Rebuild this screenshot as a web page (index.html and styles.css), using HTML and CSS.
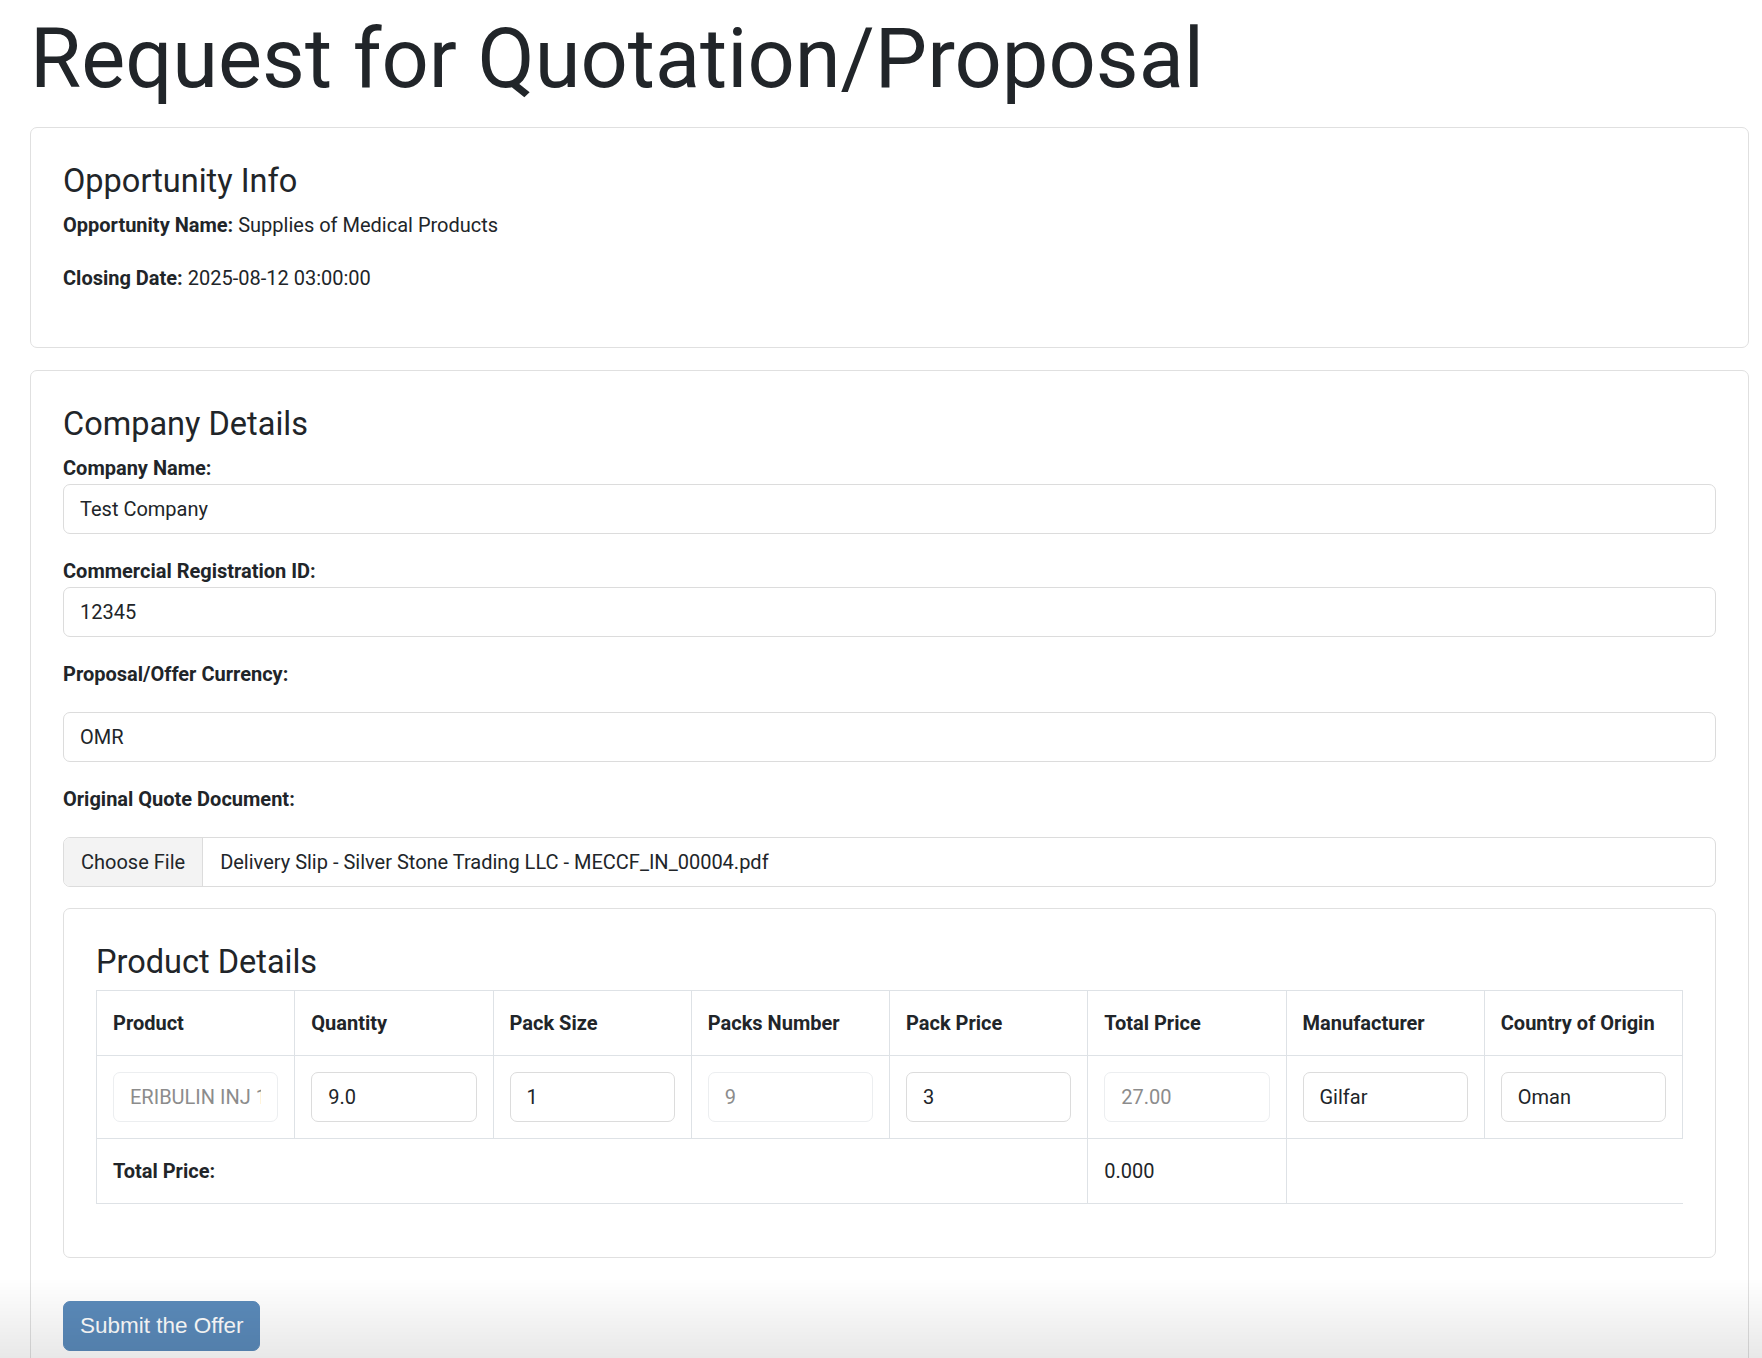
FILE: index.html
```html
<!DOCTYPE html>
<html lang="en">
	<head>
		<meta charset="utf-8" />
		<meta name="viewport" content="width=device-width, initial-scale=1" />
		<title>Request for Quotation/Proposal</title>
		<link rel="stylesheet" href="styles.css">
	</head>

	<body>
		<div class="page">
			<h1 class="page-title">Request for Quotation/Proposal</h1>

			<div class="card">
				<h4>Opportunity Info</h4>
				<p><strong>Opportunity Name:</strong> Supplies of Medical Products</p>
				<p><strong>Closing Date:</strong> 2025-08-12 03:00:00</p>
			</div>

			<form class="card">
				<h4>Company Details</h4>

				<div class="form-group">
					<label>Company Name:</label>
					<input class="form-control" type="text" value="Test Company">
				</div>

				<div class="form-group">
					<label>Commercial Registration ID:</label>
					<input class="form-control" type="text" value="12345">
				</div>

				<div class="form-group spaced">
					<label>Proposal/Offer Currency:</label>
					<select class="form-control">
						<option>OMR</option>
					</select>
				</div>

				<div class="form-group spaced">
					<label>Original Quote Document:</label>
					<div class="file-input">
						<span class="file-button">Choose File</span>
						<span class="file-name">Delivery Slip - Silver Stone Trading LLC - MECCF_IN_00004.pdf</span>
					</div>
				</div>

				<div class="card product-card">
					<h4>Product Details</h4>
					<table class="product-table">
						<tr>
							<th>Product</th>
							<th>Quantity</th>
							<th>Pack Size</th>
							<th>Packs Number</th>
							<th>Pack Price</th>
							<th>Total Price</th>
							<th>Manufacturer</th>
							<th>Country of Origin</th>
						</tr>
						<tr>
							<td><input class="form-control readonly" type="text" value="ERIBULIN INJ 1MG/2ML" readonly></td>
							<td><input class="form-control" type="text" value="9.0"></td>
							<td><input class="form-control" type="text" value="1"></td>
							<td><input class="form-control readonly" type="text" value="9" readonly></td>
							<td><input class="form-control" type="text" value="3"></td>
							<td><input class="form-control readonly" type="text" value="27.00" readonly></td>
							<td><input class="form-control" type="text" value="Gilfar"></td>
							<td><input class="form-control" type="text" value="Oman"></td>
						</tr>
						<tr class="total">
							<td colspan="5"><strong>Total Price:</strong></td>
							<td>0.000</td>
							<td colspan="2" class="last"></td>
						</tr>
					</table>
				</div>

				<button class="btn-submit" type="button">Submit the Offer</button>
			</form>
		</div>
		<div class="bottom-fade"></div>
	</body>
</html>
```

FILE: styles.css
```css
html,
body {
	margin: 0;
	overflow: hidden;
}

body {
	font-family: Roboto, 'Liberation Sans', sans-serif;
	font-size: 20px;
	line-height: 32px;
	color: #212529;
	background: #fff;
}

.page {
	padding: 9px 13px 0 30px;
}

.page-title {
	font-family: Roboto, sans-serif;
	font-size: 83px;
	font-weight: 400;
	line-height: 100px;
	margin: 0 0 18px;
}

.card {
	border: 1px solid #e0e0e0;
	border-radius: 7px;
	padding: 32px;
	margin: 0 0 22px;
}

.card h4 {
	font-family: Roboto, sans-serif;
	font-size: 32.5px;
	font-weight: 400;
	line-height: 42px;
	margin: 0 0 7px;
}

.card p {
	margin: 0 0 21px;
}

.card strong,
.card label,
.product-table th {
	font-weight: 700;
}

.form-group {
	margin-bottom: 21px;
}

.form-group label {
	display: block;
	margin: 0;
}

.form-group.spaced label {
	margin-bottom: 22px;
}

.form-control {
	display: block;
	box-sizing: border-box;
	width: 100%;
	height: 50px;
	padding: 8px 16px;
	font-family: inherit;
	font-size: 20px;
	line-height: 32px;
	color: #212529;
	background: #fff;
	border: 1px solid #dcdcdc;
	border-radius: 7px;
	-webkit-appearance: none;
	appearance: none;
	outline: none;
}

.form-control.readonly {
	color: #8c8c8c;
	border-color: #eceef0;
}

.file-input {
	display: flex;
	height: 50px;
	box-sizing: border-box;
	border: 1px solid #dcdcdc;
	border-radius: 7px;
	overflow: hidden;
	line-height: 48px;
}

.file-button {
	padding: 0 17px;
	background: #f3f3f3;
	border-right: 1px solid #dcdcdc;
}

.file-name {
	padding-left: 17px;
}

.product-card {
	margin-bottom: 43px;
}

.product-table {
	width: 100%;
	table-layout: fixed;
	border-collapse: collapse;
	margin-bottom: 21px;
	font-size: 20px;
	line-height: 32px;
}

.product-table th,
.product-table td {
	border: 1px solid #dee2e6;
	padding: 16px;
	text-align: left;
	vertical-align: middle;
}

.product-table tr.total td.last {
	border-right: none;
}

.btn-submit {
	display: inline-block;
	height: 50px;
	padding: 0 16px;
	font-family: 'Liberation Sans', Arial, sans-serif;
	font-size: 22.5px;
	color: #fff;
	background: #5b8bbb;
	border: 1px solid #5b8bbb;
	border-radius: 7px;
}

.bottom-fade {
	position: fixed;
	left: 0;
	right: 0;
	bottom: 0;
	height: 80px;
	background: linear-gradient(to bottom, rgba(0, 0, 0, 0), rgba(0, 0, 0, 0.09));
	pointer-events: none;
}
```
